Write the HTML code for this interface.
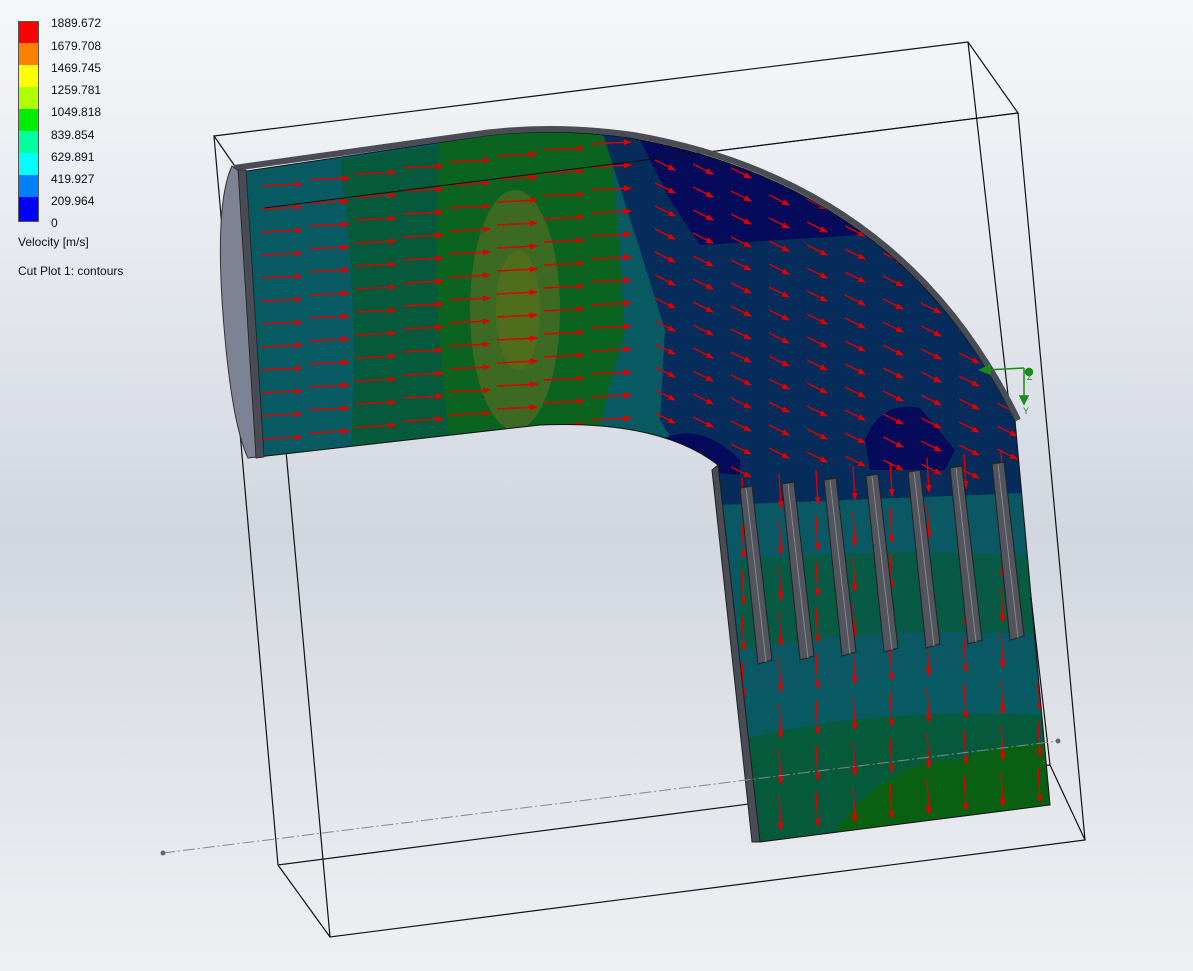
<!DOCTYPE html>
<html><head><meta charset="utf-8"><style>
html,body{margin:0;padding:0;width:1193px;height:971px;overflow:hidden}
body{background:linear-gradient(180deg,#f6f7f9 0%,#e4e7ee 30%,#d2d6df 55%,#dfe2e8 75%,#eef0f3 100%);font-family:"Liberation Sans",sans-serif}
#leg{position:absolute;left:18px;top:21px}
.b{position:absolute;left:0;width:20px;height:22px}
.l{position:absolute;left:33px;font-size:12px;color:#111;line-height:12px}
.t{position:absolute;left:0;font-size:12px;color:#111;white-space:nowrap}
svg{position:absolute;left:0;top:0}
</style></head><body>
<svg width="1193" height="971" viewBox="0 0 1193 971" id="s">
<defs>
<clipPath id="cp"><path d="M240,172 L470,138 Q545,126 630,138 Q900,185 1015,420 L1050,805 L760,842 L718,465 Q660,420 540,425 L258,457 Z"/></clipPath>
<marker id="ah" markerWidth="8" markerHeight="6" refX="7" refY="3" orient="auto" markerUnits="userSpaceOnUse"><path d="M0,0 L8,3 L0,6Z" fill="#d00"/></marker>
</defs>
<g stroke="#111" stroke-width="1.2" fill="none">
<path d="M214,136 L968,42 L1018,113 L264,208 Z"/>
<path d="M214,136 L278,865 L1050,765 L968,42 M264,208 L330,937 L1085,840 L1018,113 M278,865 L330,937 M1050,765 L1085,840"/>
</g>
<g clip-path="url(#cp)">
<rect x="200" y="100" width="900" height="800" fill="#075a62"/>
<path d="M340,160 L600,120 L610,330 L600,420 L350,460 Q360,300 340,160 Z" fill="#065a3c"/>
<path d="M440,140 L610,125 L625,330 L600,425 L450,440 Q430,300 440,140 Z" fill="#0a6420"/>
<ellipse cx="515" cy="310" rx="45" ry="120" fill="#3d6a22"/>
<ellipse cx="518" cy="310" rx="22" ry="60" fill="#4e6e1e"/>
<path d="M600,125 L1100,100 L1100,540 L720,520 L660,420 L665,330 L640,250 Z" fill="#062c5c"/>
<path d="M640,140 L870,180 L860,235 L700,245 L670,200 Z" fill="#060a5a"/>
<path d="M865,440 Q880,400 920,408 L955,450 L945,470 L870,470 Z" fill="#060a5a"/>
<path d="M660,440 Q700,420 740,460 L740,475 L690,470 Z" fill="#060a5a"/>
<path d="M720,505 L1100,490 L1100,650 L740,700 Z" fill="#0a5864"/>
<path d="M740,560 Q900,545 1100,560 L1100,640 Q900,620 740,650 Z" fill="#075a44"/>
<path d="M740,740 Q900,700 1100,720 L1100,900 L740,900 Z" fill="#055a3c"/>
<path d="M830,840 Q880,760 960,760 Q1000,740 1100,745 L1100,900 L830,900 Z" fill="#0a6012"/>
<g id="arr" stroke="#d00" stroke-width="1.4"></g>
</g>
<path d="M240,172 L470,138 Q545,126 630,138 Q900,185 1015,420 L1050,805 L760,842 L718,465 Q660,420 540,425 L258,457 Z" fill="none" stroke="#111" stroke-width="1"/>
<path d="M264,208 L1018,113" stroke="#111" stroke-width="1.1"/>
<path d="M234,168 L470,135 Q548,123 633,135 Q903,182 1018,420" stroke="#4a4c55" stroke-width="6" fill="none"/>
<path d="M232,166 Q216,200 222,300 Q230,420 248,458 L258,457 L240,172 Z" fill="#7d8294" stroke="#333"/>
<path d="M238,170 L246,170 L264,457 L256,458 Z" fill="#4a4c55" stroke="#222" stroke-width="0.8"/>
<path d="M718,465 L760,842 L752,842 L712,470 Z" fill="#4a4c55" stroke="#222"/>
<g id="fins"></g>
<path d="M163,853 L1058,741" stroke="#888" stroke-width="1" stroke-dasharray="12,3,2,3"/>
<circle cx="163" cy="853" r="2.5" fill="#666"/><circle cx="1058" cy="741" r="2.5" fill="#666"/>
<g stroke="#1a8a1a" stroke-width="1.5" fill="#1a8a1a">
<path d="M1024,368 L985,370" /><path d="M1024,368 L1024,402" fill="none"/>
<path d="M980,370 L990,365 L990,374 Z"/><path d="M1024,404 L1020,396 L1028,396 Z"/>
<circle cx="1029" cy="372" r="3.5"/>
</g>
<text x="1023" y="414" font-size="9" fill="#1a8a1a" font-family="Liberation Sans">Y</text>
<text x="1027" y="380" font-size="9" fill="#1a8a1a" font-family="Liberation Sans">Z</text>
</svg>
<div id="leg">
<div class="b" style="top:0;background:#f00"></div>
<div class="b" style="top:22px;background:#ff8000"></div>
<div class="b" style="top:44px;background:#ff0"></div>
<div class="b" style="top:66px;background:#b0ff00"></div>
<div class="b" style="top:88px;background:#00ee00"></div>
<div class="b" style="top:110px;background:#00ffa0"></div>
<div class="b" style="top:132px;background:#00ffff"></div>
<div class="b" style="top:154px;background:#0080ff"></div>
<div class="b" style="top:176px;background:#0000ff;height:24px"></div>
<div style="position:absolute;left:0;top:0;width:19px;height:199px;border:1px solid #555"></div>
<div class="l" style="top:-4px">1889.672</div>
<div class="l" style="top:19px">1679.708</div>
<div class="l" style="top:41px">1469.745</div>
<div class="l" style="top:63px">1259.781</div>
<div class="l" style="top:85px">1049.818</div>
<div class="l" style="top:108px">839.854</div>
<div class="l" style="top:130px">629.891</div>
<div class="l" style="top:152px">419.927</div>
<div class="l" style="top:174px">209.964</div>
<div class="l" style="top:196px">0</div>
<div class="t" style="top:214px">Velocity [m/s]</div>
<div class="t" style="top:243px">Cut Plot 1: contours</div>
</div>
<script>
var NS="http://www.w3.org/2000/svg",a=document.getElementById("arr"),f=document.getElementById("fins");
function ar(x,y,dx,dy){var l=document.createElementNS(NS,"line");l.setAttribute("x1",x);l.setAttribute("y1",y);l.setAttribute("x2",x+dx);l.setAttribute("y2",y+dy);l.setAttribute("marker-end","url(#ah)");a.appendChild(l);}
for(var c=0;c<8;c++)for(var r=0;r<13;r++){var x=262+c*47,y=186-c*6+r*23;ar(x,y,40,-2);}
for(var c=0;c<10;c++)for(var r=0;r<14;r++){var x=655+c*38,y=160+c*4+r*23;if(y>470)continue;if(x<700&&y>430)continue;ar(x,y,20,10);}
for(var c=0;c<9;c++)for(var r=0;r<8;r++){var x=742+c*37,y=478+r*46-c*4;ar(x,y,2,34);}
for(var i=0;i<7;i++){var x=740+i*42,y=488-i*4;var p=document.createElementNS(NS,"path");p.setAttribute("d","M"+x+","+y+" L"+(x+12)+","+(y-2)+" L"+(x+32)+","+(y+172)+" L"+(x+18)+","+(y+176)+" Z");p.setAttribute("fill","#52545e");p.setAttribute("stroke","#222");f.appendChild(p);var q=document.createElementNS(NS,"line");q.setAttribute("x1",x+6);q.setAttribute("y1",y);q.setAttribute("x2",x+26);q.setAttribute("y2",y+174);q.setAttribute("stroke","#888");f.appendChild(q);}
</script>
</body></html>
